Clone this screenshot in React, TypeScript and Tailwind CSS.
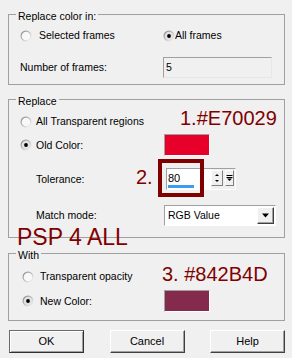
import React from 'react';

function Radio({ id, checked }: { id: string; checked?: boolean }) {
  return (
    <svg width="12" height="12" viewBox="0 0 12 12" className="shrink-0">
      <defs>
        <linearGradient id={id} x1="0" y1="0" x2="1" y2="1">
          <stop offset="0" stopColor="#7a7a7a" />
          <stop offset="0.55" stopColor="#c8c8c8" />
          <stop offset="1" stopColor="#ffffff" />
        </linearGradient>
      </defs>
      <circle cx="6" cy="6" r="5.5" fill={`url(#${id})`} />
      <circle cx="6" cy="6" r="4.3" fill={checked ? '#e2e2e2' : '#f8f8f8'} />
      {checked && <circle cx="6" cy="6" r="1.9" fill="#000" />}
    </svg>
  );
}

function Group({ title, className, children }: { title: string; className: string; children: React.ReactNode }) {
  return (
    <div className={`relative border border-[#a0a0a0] ${className}`}>
      <span className="absolute left-[7px] top-[-5px] bg-[#f0f0f0] px-[2px] leading-[13px]">{title}</span>
      {children}
    </div>
  );
}

function Swatch({ color }: { color: string }) {
  return (
    <div
      className={`h-[22px] w-[46px] border border-t-[#a0a0a0] border-l-[#a0a0a0] border-r-white border-b-white ${color}`}
    />
  );
}

function Btn({ label, def }: { label: string; def?: boolean }) {
  return (
    <button
      type="button"
      className={`h-[23px] w-[75px] bg-[#f0f0f0] text-[11px] leading-[13px] text-black ${
        def
          ? 'border border-[#6a6a6a] border-r-[#303030] border-b-[#303030] shadow-[inset_1px_1px_0_#ffffff,inset_-1px_-1px_0_#a0a0a0]'
          : 'border border-t-white border-l-white border-r-[#404040] border-b-[#404040] shadow-[inset_-1px_-1px_0_#a0a0a0]'
      }`}
    >
      {label}
    </button>
  );
}

export default function App() {
  return (
    <div className="relative h-[358px] w-[292px] overflow-hidden bg-[#f0f0f0] pl-[8px] pr-[7px] pt-[14px] font-['Liberation_Sans',Arial,sans-serif] text-[10.5px] leading-[13px] text-black">
      {/* Replace color in */}
      <Group title="Replace color in:" className="flex h-[71px] flex-col pl-[11px] pt-[14px]">
        <div className="flex h-[13px] items-center">
          <div className="flex w-[143px] items-center gap-[7px]">
            <Radio id="r1" />
            <span>Selected frames</span>
          </div>
          <div className="flex items-center">
            <Radio id="r2" checked />
            <span>All frames</span>
          </div>
        </div>
        <div className="mt-[15px] flex h-[21px] items-center">
          <span className="w-[143px]">Number of frames:</span>
          <div className="flex h-[21px] w-[109px] items-center border border-[#a0a0a0] border-b-[#e6e6e6] border-r-[#e6e6e6] bg-[#f0f0f0] pl-[2px]">
            5
          </div>
        </div>
      </Group>

      {/* Replace */}
      <Group title="Replace" className="mt-[14px] flex h-[139px] flex-col pl-[11px] pt-[15px]">
        <div className="flex h-[13px] items-center gap-[4px]">
          <Radio id="r3" />
          <span>All Transparent regions</span>
        </div>
        <div className="mt-[6px] flex h-[22px] items-center">
          <div className="flex w-[144px] items-center gap-[4px]">
            <Radio id="r4" checked />
            <span>Old Color:</span>
          </div>
          <Swatch color="bg-[#e70029]" />
        </div>
        <div className="mt-[12px] flex h-[22px] items-center">
          <span className="w-[146px] pl-[16px]">Tolerance:</span>
          <div className="flex h-[22px] w-[70px] border border-t-[#a0a0a0] border-l-[#a0a0a0] border-r-white border-b-white">
            <div className="relative h-full w-[44px] bg-white pl-[1px] text-[11px] leading-[18px]">
              80
              <div className="absolute bottom-[1px] left-[1px] h-[3px] w-[26px] bg-[#3d9cf2]" />
            </div>
            <div className="ml-[0px] mt-[1px] flex h-[16px] w-[12px] flex-col border border-t-white border-l-white border-r-[#808080] border-b-[#808080] bg-[#f0f0f0]">
              <svg width="10" height="7" viewBox="0 0 10 7">
                <path d="M3 5h4L5 3z" fill="#000" />
              </svg>
              <svg width="10" height="7" viewBox="0 0 10 7">
                <path d="M3 2h4L5 4z" fill="#000" />
              </svg>
            </div>
            <div className="ml-[2px] mt-[1px] flex h-[16px] w-[9px] items-center justify-center border border-t-white border-l-white border-r-[#808080] border-b-[#808080] bg-[#f0f0f0]">
              <svg width="7" height="8" viewBox="0 0 7 8">
                <path d="M0.5 1.5h6M0.5 3.5h6" stroke="#000" strokeWidth="1" />
                <path d="M1 4.5h5L3.5 7z" fill="#000" />
              </svg>
            </div>
          </div>
        </div>
        <div className="mt-[15px] flex h-[21px] items-center">
          <span className="w-[144px] pl-[16px]">Match mode:</span>
          <div className="flex h-[21px] w-[112px] items-center border border-t-[#a0a0a0] border-l-[#a0a0a0] border-r-white border-b-white bg-white pl-[3px] pr-[1px]">
            <span className="flex-1">RGB Value</span>
            <div className="flex h-[17px] w-[17px] items-center justify-center border border-t-white border-l-white border-r-[#404040] border-b-[#404040] bg-[#f0f0f0] shadow-[inset_-1px_-1px_0_#a0a0a0]">
              <svg width="9" height="5" viewBox="0 0 9 5">
                <path d="M1 0.5h7L4.5 4.5z" fill="#000" />
              </svg>
            </div>
          </div>
        </div>
      </Group>

      {/* With */}
      <Group title="With" className="mt-[15px] flex h-[68px] flex-col pl-[13px] pt-[16px]">
        <div className="flex h-[13px] items-center gap-[6px]">
          <Radio id="r5" />
          <span>Transparent opacity</span>
        </div>
        <div className="mt-[7px] flex h-[22px] items-center">
          <div className="flex w-[142px] items-center gap-[6px]">
            <Radio id="r6" checked />
            <span>New Color:</span>
          </div>
          <Swatch color="bg-[#842b4d]" />
        </div>
      </Group>

      {/* Buttons */}
      <div className="mt-[9px] flex justify-between pl-[1px]">
        <Btn label="OK" def />
        <Btn label="Cancel" />
        <Btn label="Help" />
      </div>

      {/* Annotations */}
      <span className="absolute left-[180px] top-[108px] text-[20px] leading-[20px] text-[#800000]">1.#E70029</span>
      <span className="absolute left-[136px] top-[167px] text-[20px] leading-[20px] text-[#800000]">2.</span>
      <div className="absolute left-[158px] top-[159px] h-[38px] w-[46px] border-4 border-[#800000]" />
      <span className="absolute left-[17px] top-[226px] text-[23px] leading-[23px] text-[#800000]">PSP 4 ALL</span>
      <span className="absolute left-[162px] top-[264px] text-[20px] leading-[20px] text-[#800000]">3. #842B4D</span>
    </div>
  );
}
